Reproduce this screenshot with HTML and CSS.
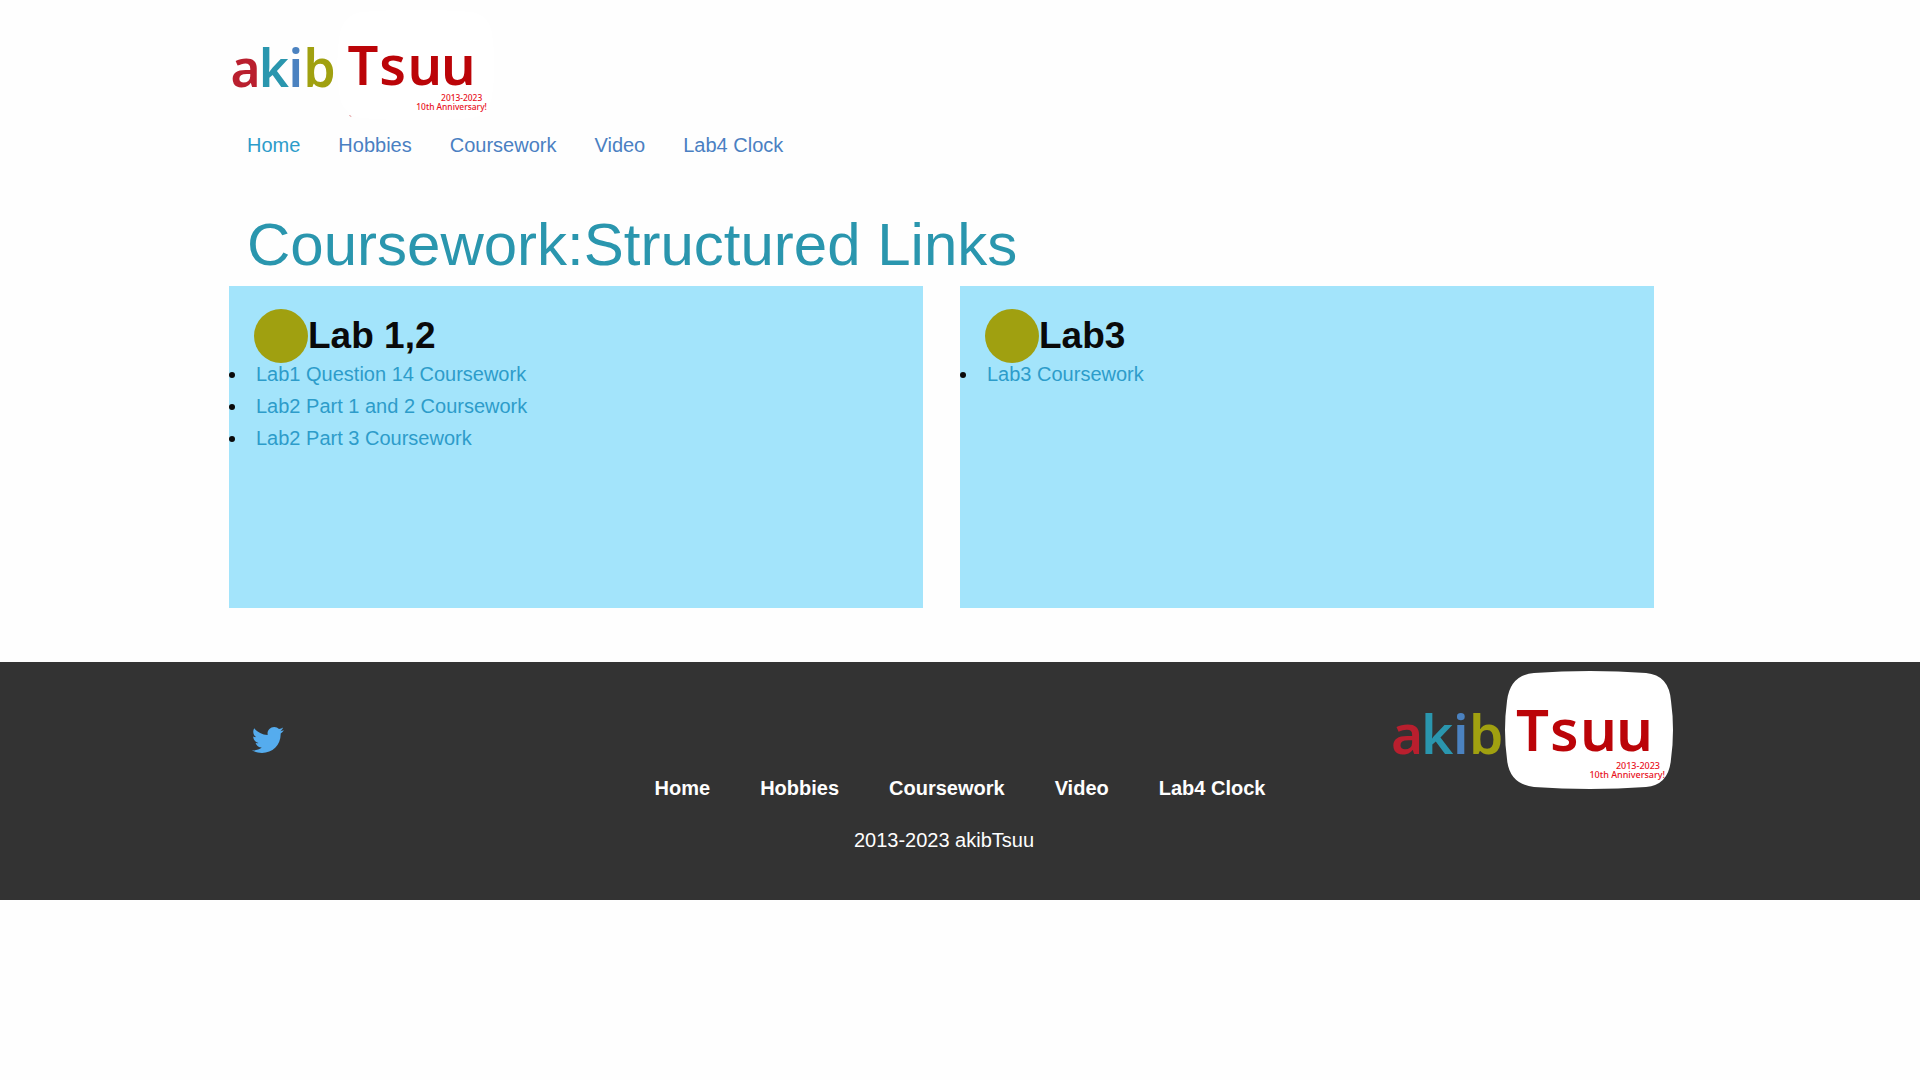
FILE: index.html
```html
<!DOCTYPE html>
<html lang="en">
<head>
<meta charset="utf-8">
<meta name="viewport" content="width=device-width, initial-scale=1">
<title>akibTsuu - Coursework</title>
<link rel="stylesheet" href="styles.css">
</head>
<body>
<header class="container header">
  <a class="brand" href="#" aria-label="akib Tsuu">
    <svg class="logo" viewBox="0 0 284 124">
      <path class="logo-screen" d="M144 5Q200 1 256 5Q279 7 281 33Q285 62 281 91Q279 117 256 119Q200 123 144 119Q119 116 117 91Q113 62 117 33Q120 7 144 5Z"/>
      <text class="logo-word" y="86"><tspan class="logo-a" x="1">a</tspan><tspan class="logo-k" x="31">k</tspan><tspan class="logo-i" x="63">i</tspan><tspan class="logo-b" x="79">b</tspan></text>
      <text class="logo-name" y="83" x="126 160 190 226">Tsuu</text>
      <text class="logo-tag" x="270" y="101">2013-2023</text>
      <text class="logo-tag" x="275" y="110">10th Anniversary!</text>
      <path class="logo-speck" d="M128 116l2 1"/>
    </svg>
  </a>
  <nav>
    <ul class="menu">
      <li><a class="active" href="#">Home</a></li>
      <li><a href="#">Hobbies</a></li>
      <li><a href="#">Coursework</a></li>
      <li><a href="#">Video</a></li>
      <li><a href="#">Lab4 Clock</a></li>
    </ul>
  </nav>
</header>

<main class="container">
  <h1>Coursework:Structured Links</h1>
  <div class="cards">
    <section class="card">
      <h2><span class="dot"></span>Lab 1,2</h2>
      <ul>
        <li><a href="#">Lab1 Question 14 Coursework</a></li>
        <li><a href="#">Lab2 Part 1 and 2 Coursework</a></li>
        <li><a href="#">Lab2 Part 3 Coursework</a></li>
      </ul>
    </section>
    <section class="card">
      <h2><span class="dot"></span>Lab3</h2>
      <ul>
        <li><a href="#">Lab3 Coursework</a></li>
      </ul>
    </section>
  </div>
</main>

<footer class="footer">
  <div class="footer-inner">
    <a class="twitter" href="#" aria-label="Twitter">
      <svg viewBox="0 0 32 26"><path d="M28.700 6.500C29 18 20.500 26 10 26C6.300 26 2.900 25 0 23.300C3.500 23.700 7 22.700 9.700 20.600C6.700 20.500 4.400 18.600 3.600 16C4.600 16.200 5.600 16.200 6.500 15.900C3.300 15.200 1.100 12.500 1.200 9.400C2.100 9.900 3.100 10.200 4.200 10.200C1.200 8.200 .4 4.300 2.200 1.200C5.500 5.200 10.300 7.700 15.700 8C14.800 3.900 17.900 0 22.200 0C24.100 0 25.800 .8 27 2.100C28.500 1.800 29.900 1.300 31.100 .6C30.600 2.100 29.600 3.400 28.300 4.200C29.600 4 30.800 3.700 32 3.200C31.100 4.500 30 5.600 28.700 6.500Z"/></svg>
    </a>
    <div class="footer-main">
      <nav>
        <ul class="footer-menu">
          <li><a href="#">Home</a></li>
          <li><a href="#">Hobbies</a></li>
          <li><a href="#">Coursework</a></li>
          <li><a href="#">Video</a></li>
          <li><a href="#">Lab4 Clock</a></li>
        </ul>
      </nav>
      <p class="copyright">2013-2023 akibTsuu</p>
    </div>
    <a class="footer-brand" href="#" aria-label="akib Tsuu">
      <svg class="logo logo-large" viewBox="0 0 284 124">
        <path class="logo-screen" d="M144 5Q200 1 256 5Q279 7 281 33Q285 62 281 91Q279 117 256 119Q200 123 144 119Q119 116 117 91Q113 62 117 33Q120 7 144 5Z"/>
        <text class="logo-word" y="86"><tspan class="logo-a" x="1">a</tspan><tspan class="logo-k" x="31">k</tspan><tspan class="logo-i" x="63">i</tspan><tspan class="logo-b" x="79">b</tspan></text>
        <text class="logo-name" y="83" x="126 160 190 226">Tsuu</text>
        <text class="logo-tag" x="270" y="101">2013-2023</text>
        <text class="logo-tag" x="275" y="110">10th Anniversary!</text>
      </svg>
    </a>
  </div>
</footer>
</body>
</html>
```

FILE: styles.css
```css
* {
  box-sizing: border-box;
}

body {
  margin: 0;
  background: #fefefe;
  color: #0a0a0a;
  font: 20px/32px "Liberation Sans", Arial, sans-serif;
}

a {
  color: #2d9cca;
  text-decoration: none;
}

ul {
  margin: 0;
  padding: 0;
}

.container {
  max-width: 1500px;
  margin: 0 auto;
  padding: 0 56px 0 19px;
}

/* Logo */
.brand {
  display: inline-block;
}

.logo {
  display: block;
  width: 267px;
  height: 116px;
}

.logo-large {
  width: 284px;
  height: 124px;
}

.logo-screen { fill: #fff; }

.logo-word,
.logo-name {
  font: 600 55px "Noto Sans", "Open Sans", sans-serif;
}

.logo-name {
  font-size: 58px;
  fill: #bb0408;
}

.logo-a { fill: #b91f2e; }
.logo-k { fill: #2a96ae; }
.logo-i { fill: #4b82c0; }
.logo-b { fill: #a0a010; }

.logo-tag {
  font: 500 9px "Noto Sans", "Open Sans", sans-serif;
  fill: #e8101c;
  text-anchor: end;
}

.logo-speck {
  stroke: #bb0408;
  stroke-opacity: .5;
}

/* Header */
.header {
  padding-top: 7px;
}

.menu,
.footer-menu {
  display: flex;
  flex-wrap: wrap;
  list-style: none;
}

.menu {
  gap: 0 38px;
  padding: 0 18px;
}

.brand {
  margin-bottom: 6px;
  vertical-align: top;
}

.menu a {
  color: #4a80c2;
}

.menu .active {
  color: #2d9cca;
}

/* Coursework */
h1 {
  margin: 42px 0 0;
  padding: 0 0 0 18px;
  color: #2a96ae;
  font-size: 60px;
  font-weight: 400;
  line-height: 83px;
}

.cards {
  display: grid;
  grid-template-columns: 1fr 1fr;
  gap: 37px;
}

.card {
  min-height: 322px;
  padding-top: 23px;
  background: #a3e4fb;
}

.card h2 {
  display: flex;
  align-items: center;
  margin: 0 0 0 25px;
  font-size: 37px;
  line-height: 52px;
}

.card ul {
  margin: -5px 0 0 19px;
}

.card li {
  padding-left: 8px;
}

.dot {
  width: 54px;
  height: 54px;
  border-radius: 50%;
  background: #a0a010;
}

/* Footer */
.footer {
  margin-top: 54px;
  background: #333;
  color: #fefefe;
}

.footer-inner {
  display: grid;
  grid-template-columns: 1fr auto 1fr;
  max-width: 1500px;
  margin: 0 auto;
  padding: 6px 36px 44px;
}

.twitter {
  justify-self: start;
  margin: 59px 0 0 6px;
}

.twitter svg {
  display: block;
  width: 32px;
  height: 26px;
  fill: #55acee;
}

.footer-main {
  padding-top: 104px;
}

.footer-menu {
  gap: 0 50px;
  font-weight: 700;
}

.footer-menu a {
  color: #fefefe;
}

.copyright {
  margin: 20px 0 0;
  padding-right: 32px;
  text-align: center;
}

.footer-brand {
  justify-self: end;
}
```
